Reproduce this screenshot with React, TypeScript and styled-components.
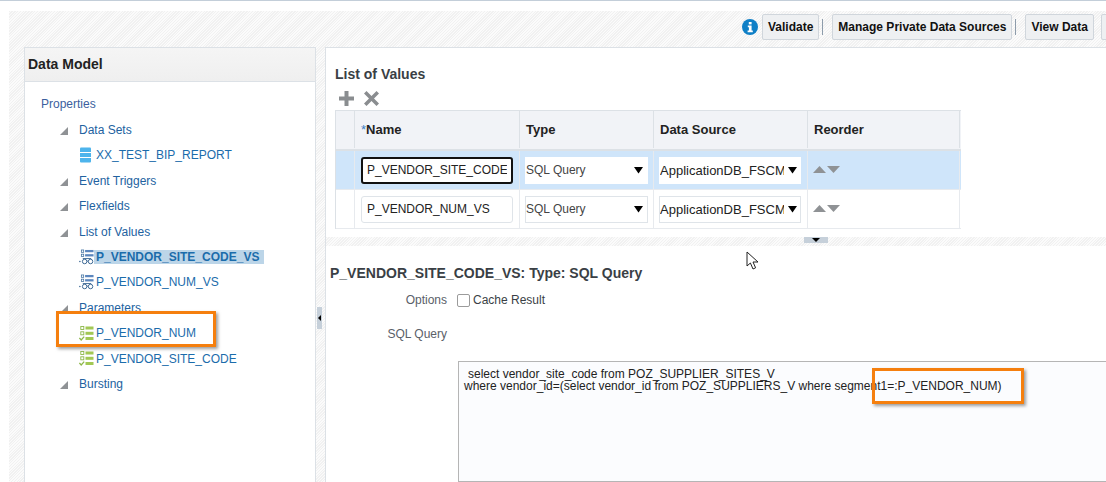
import styled, { createGlobalStyle } from "styled-components";

const GlobalStyle = createGlobalStyle`
  html, body {
    margin: 0;
    padding: 0;
    background: #fff;
  }
  body {
    font-family: "Liberation Sans", Arial, sans-serif;
    font-size: 12px;
    color: #333;
  }
`;

const hatch = `repeating-linear-gradient(135deg, #f1f1f1 0 1px, #fbfbfb 1px 2px)`;

type TreeItem = {
  label: string;
  kind: "section" | "dataset" | "lov" | "param";
  selected?: boolean;
};

const treeItems: TreeItem[] = [
  { label: "Data Sets", kind: "section" },
  { label: "XX_TEST_BIP_REPORT", kind: "dataset" },
  { label: "Event Triggers", kind: "section" },
  { label: "Flexfields", kind: "section" },
  { label: "List of Values", kind: "section" },
  { label: "P_VENDOR_SITE_CODE_VS", kind: "lov", selected: true },
  { label: "P_VENDOR_NUM_VS", kind: "lov" },
  { label: "Parameters", kind: "section" },
  { label: "P_VENDOR_NUM", kind: "param" },
  { label: "P_VENDOR_SITE_CODE", kind: "param" },
  { label: "Bursting", kind: "section" },
];

const lovRows = [
  { name: "P_VENDOR_SITE_CODE_VS", selected: true },
  { name: "P_VENDOR_NUM_VS", selected: false },
];

const DatabaseIcon = () => (
  <svg width="13" height="16" viewBox="0 0 13 16">
    <path d="M1 1.500 Q1 0.500 2 0.500 H11 Q12 0.500 12 1.500 V5 H1Z" fill="#4db4ec" />
    <rect x="1" y="6" width="11" height="4" fill="#4db4ec" />
    <path d="M1 11 H12 V14.500 Q12 15.500 11 15.500 H2 Q1 15.500 1 14.500Z" fill="#4db4ec" />
  </svg>
);

const LovIcon = () => (
  <svg width="16" height="16" viewBox="0 0 16 16" fill="none">
    <rect x="2.500" y="0.500" width="2.500" height="2.500" stroke="#3f6f9f" strokeWidth="0.8" />
    <rect x="2.500" y="5" width="2.500" height="2.500" stroke="#3f6f9f" strokeWidth="0.8" />
    <rect x="6.500" y="0.500" width="9" height="2.400" fill="#5b86bd" />
    <rect x="6.500" y="5" width="9" height="2.400" fill="#5b86bd" />
    <circle cx="6" cy="12.800" r="2.400" stroke="#33618f" strokeWidth="1" />
    <circle cx="12.300" cy="12.800" r="2.400" stroke="#33618f" strokeWidth="1" />
    <path d="M8.400 12.400h1.500M4 9.600h9" stroke="#33618f" strokeWidth="0.9" />
    <circle cx="0.900" cy="12.800" r="0.800" fill="#33618f" />
  </svg>
);

const ParamIcon = () => (
  <svg width="15" height="15" viewBox="0 0 15 15" fill="none">
    <rect x="1.800" y="0.500" width="3" height="3" stroke="#8db84a" strokeWidth="0.9" />
    <rect x="1.800" y="5.800" width="3" height="3" stroke="#8db84a" strokeWidth="0.9" />
    <rect x="6.500" y="0.500" width="8" height="3" fill="#a2c854" />
    <rect x="6.500" y="5.800" width="8" height="3" fill="#a2c854" />
    <rect x="6.500" y="11" width="8" height="3" fill="#a2c854" />
    <path d="M0.400 12 L2.200 14 L5.200 10.600" stroke="#8db84a" strokeWidth="1.300" />
  </svg>
);

const InfoIcon = () => (
  <svg width="16" height="16" viewBox="0 0 16 16">
    <circle cx="8" cy="8" r="8" fill="#0f7fc6" />
    <rect x="6.800" y="3" width="2.800" height="2.400" fill="#fff" />
    <path d="M5.800 6.600h3.800v5h1.200v1.600H5.600v-1.600h1.300V8.200H5.800Z" fill="#fff" />
  </svg>
);

const Cursor = () => (
  <svg width="14" height="20" viewBox="0 0 14 20">
    <path
      d="M1 1 L1 15 L4.400 12 L7 18 L9.600 16.800 L7 11 L12 11 Z"
      fill="#fff"
      stroke="#222"
      strokeWidth="1"
    />
  </svg>
);

const Triangle = ({ down }: { down?: boolean }) => (
  <svg width="14" height="8" viewBox="0 0 14 8">
    <path d={down ? "M0 0H13L6.500 7Z" : "M0 7H13L6.500 0Z"} fill="#8f9295" />
  </svg>
);

const SelectArrow = () => (
  <svg width="9" height="7" viewBox="0 0 9 7">
    <path d="M0 0H9L4.500 6.500Z" fill="#000" />
  </svg>
);

const TreeRowContent = ({ item }: { item: TreeItem }) => {
  if (item.kind === "section") {
    return (
      <SectionRow>
        <Expander />
        <TreeLink>{item.label}</TreeLink>
      </SectionRow>
    );
  }
  return (
    <LeafRow>
      <LeafIcon>
        {item.kind === "dataset" && <DatabaseIcon />}
        {item.kind === "lov" && <LovIcon />}
        {item.kind === "param" && <ParamIcon />}
      </LeafIcon>
      <LeafLabel $selected={item.selected}>{item.label}</LeafLabel>
    </LeafRow>
  );
};

const App = () => {
  return (
    <Page>
      <GlobalStyle />
      <Workspace>
        <Toolbar>
          <InfoSlot>
            <InfoIcon />
          </InfoSlot>
          <ToolButton>Validate</ToolButton>
          <ToolSeparator />
          <ToolButton>Manage Private Data Sources</ToolButton>
          <ToolSeparator />
          <ToolButton>View Data</ToolButton>
          <ToolButton />
        </Toolbar>
        <Panels>
          <Sidebar>
            <SidebarHeader>Data Model</SidebarHeader>
            <Tree>
              <PropertiesLink>Properties</PropertiesLink>
              {treeItems.map((item) => (
                <TreeRowContent key={item.label} item={item} />
              ))}
            </Tree>
            <ParamCallout />
          </Sidebar>
          <VerticalSplitter>
            <SplitterHandle />
          </VerticalSplitter>
          <Main>
            <ListSection>
              <SectionTitle>List of Values</SectionTitle>
              <IconBar>
                <svg width="17" height="17" viewBox="0 0 17 17">
                  <path d="M6.500 1h4v5.500H16v4h-5.500V16h-4v-5.500H1v-4h5.500Z" fill="#8a8d90" />
                </svg>
                <svg width="17" height="17" viewBox="0 0 17 17">
                  <path
                    d="M3.500 1 8.500 6l5-5L16 3.500 11 8.500l5 5L13.500 16l-5-5-5 5L1 13.500l5-5-5-5Z"
                    fill="#8a8d90"
                  />
                </svg>
              </IconBar>
              <LovTable>
                <HeaderRow>
                  <HeaderCell />
                  <HeaderCell>
                    <Required>*</Required>Name
                  </HeaderCell>
                  <HeaderCell>Type</HeaderCell>
                  <HeaderCell>Data Source</HeaderCell>
                  <HeaderCell>Reorder</HeaderCell>
                </HeaderRow>
                {lovRows.map((row) => (
                  <BodyRow key={row.name} $selected={row.selected}>
                    <BodyCell />
                    <NameCell>
                      <NameInput $focused={row.selected}>
                        <NameText>{row.name}</NameText>
                      </NameInput>
                    </NameCell>
                    <BodyCell>
                      <SelectBox $plain={row.selected}>
                        <TypeValue>SQL Query</TypeValue>
                        <SelectArrow />
                      </SelectBox>
                    </BodyCell>
                    <BodyCell>
                      <SelectBox $plain={row.selected} $tight>
                        <SourceValue>ApplicationDB_FSCM</SourceValue>
                        <SelectArrow />
                      </SelectBox>
                    </BodyCell>
                    <ReorderCell>
                      <Triangle />
                      <Triangle down />
                    </ReorderCell>
                  </BodyRow>
                ))}
              </LovTable>
            </ListSection>
            <HorizontalSplitter>
              <CollapseHandle>
                <svg width="8" height="4" viewBox="0 0 8 4">
                  <path d="M0 0H8L4 4Z" fill="#000" />
                </svg>
              </CollapseHandle>
            </HorizontalSplitter>
            <DetailSection>
              <DetailTitle>P_VENDOR_SITE_CODE_VS: Type: SQL Query</DetailTitle>
              <FormRow>
                <FormLabel>Options</FormLabel>
                <Checkbox />
                <CheckboxLabel>Cache Result</CheckboxLabel>
              </FormRow>
              <QueryLabelRow>
                <FormLabel>SQL Query</FormLabel>
              </QueryLabelRow>
              <QueryBox>
                <QueryLine $indent>select vendor_site_code from POZ_SUPPLIER_SITES_V</QueryLine>
                <QueryLine>
                  where vendor_id=(select vendor_id from POZ_SUPPLIERS_V where segment1=:P_VENDOR_NUM)
                </QueryLine>
                <QueryCallout />
              </QueryBox>
            </DetailSection>
            <PointerSpot>
              <Cursor />
            </PointerSpot>
          </Main>
        </Panels>
      </Workspace>
    </Page>
  );
};

export default App;

const Page = styled.div`
  width: 1106px;
  height: 482px;
  overflow: hidden;
  border-top: 1px solid #c3ced9;
  box-sizing: border-box;
  padding: 10px 0 0 9px;
`;

const Workspace = styled.div`
  width: 1097px;
  height: 471px;
  display: flex;
  flex-direction: column;
  background: ${hatch};
`;

const Toolbar = styled.div`
  height: 36px;
  flex: none;
  display: flex;
  align-items: center;
  padding-left: 733px;
  box-sizing: border-box;
  padding-bottom: 5px;
`;

const InfoSlot = styled.div`
  display: flex;
  margin-right: 4px;
`;

const ToolButton = styled.div`
  height: 26px;
  min-width: 10px;
  flex: none;
  box-sizing: border-box;
  padding: 0 5px;
  display: flex;
  align-items: center;
  font-size: 12px;
  font-weight: bold;
  color: #111;
  background: #eef0f2;
  border: 1px solid #d0d6dc;
  border-radius: 2px;
  & + & {
    margin-left: 7px;
  }
`;

const ToolSeparator = styled.div`
  width: 1px;
  height: 16px;
  flex: none;
  background: #8d9cab;
  margin: 0 9px 0 3px;
`;

const Panels = styled.div`
  flex: 1;
  min-height: 0;
  display: flex;
  padding-left: 15px;
`;

const Sidebar = styled.div`
  position: relative;
  width: 292px;
  flex: none;
  box-sizing: border-box;
  background: #fff;
  border: 1px solid #dce1e6;
  border-bottom: none;
`;

const SidebarHeader = styled.div`
  height: 34px;
  box-sizing: border-box;
  padding-left: 3px;
  padding-bottom: 1px;
  display: flex;
  align-items: center;
  font-size: 14px;
  font-weight: bold;
  color: #222;
  background: linear-gradient(#f5f5f5, #efefef);
  border-bottom: 1px solid #dce1e6;
`;

const Tree = styled.div`
  display: flex;
  flex-direction: column;
  padding: 10px 0 0 16px;
`;

const PropertiesLink = styled.div`
  height: 25.4px;
  line-height: 25px;
  color: #3c5f9e;
`;

const SectionRow = styled.div`
  height: 25.4px;
  display: flex;
  align-items: center;
  padding-left: 19px;
`;

const Expander = styled.span`
  width: 0;
  height: 0;
  margin-right: 11px;
  border-left: 8px solid transparent;
  border-bottom: 8px solid #8f9295;
  position: relative;
  top: 1px;
`;

const TreeLink = styled.span`
  color: #22629f;
`;

const LeafRow = styled.div`
  height: 25.4px;
  display: flex;
  align-items: center;
  padding-left: 38px;
`;

const LeafIcon = styled.span`
  width: 15px;
  height: 16px;
  display: flex;
  align-items: center;
  flex: none;
`;

const LeafLabel = styled.span<{ $selected?: boolean }>`
  color: #1b6cab;
  padding: 0 5px 0 2px;
  line-height: 14px;
  background: ${(p) => (p.$selected ? "#bcd5e8" : "transparent")};
  font-weight: ${(p) => (p.$selected ? "bold" : "normal")};
`;

const ParamCallout = styled.div`
  position: absolute;
  left: 31px;
  top: 263px;
  width: 160px;
  height: 36px;
  box-sizing: border-box;
  border: 3px solid #f57f0e;
  box-shadow: 2px 2px 3px rgba(80, 80, 80, 0.55);
`;

const VerticalSplitter = styled.div`
  width: 9px;
  flex: none;
  display: flex;
  align-items: flex-start;
  padding-top: 260px;
  box-sizing: border-box;
  height: 100%;
`;

const SplitterHandle = styled.div`
  width: 5px;
  height: 22px;
  margin-left: 1px;
  background: #c6d0da;
  position: relative;
  &::after {
    content: "";
    position: absolute;
    left: 1px;
    top: 8px;
    border-top: 3px solid transparent;
    border-bottom: 3px solid transparent;
    border-right: 3px solid #000;
  }
`;

const Main = styled.div`
  position: relative;
  flex: 1;
  min-width: 0;
  display: flex;
  flex-direction: column;
  background: #fff;
  border-top: 1px solid #dce1e6;
  border-left: 1px solid #dce1e6;
`;

const ListSection = styled.div`
  height: 189px;
  flex: none;
  box-sizing: border-box;
  padding: 19px 0 0 9px;
`;

const SectionTitle = styled.div`
  font-size: 14px;
  font-weight: bold;
  color: #3a3f45;
  line-height: 15px;
`;

const IconBar = styled.div`
  display: flex;
  gap: 8px;
  height: 28px;
  align-items: center;
  padding: 5px 0 0 3px;
  box-sizing: border-box;
`;

const LovTable = styled.div`
  width: 625px;
  display: flex;
  flex-direction: column;
  border-top: 1px solid #dce1e6;
  border-left: 1px solid #dce1e6;
`;

const HeaderRow = styled.div`
  display: grid;
  grid-template-columns: 19px 165px 134px 154px 152px;
  height: 40px;
  padding-bottom: 1px;
  background: #f1f3f7;
  border-bottom: 2px solid #dce1e6;
  box-sizing: border-box;
`;

const HeaderCell = styled.div`
  display: flex;
  align-items: center;
  padding-left: 6px;
  font-size: 13px;
  font-weight: bold;
  color: #222;
  border-right: 1px solid #dce1e6;
  box-sizing: border-box;
`;

const Required = styled.span`
  color: #3a7fc4;
  font-weight: normal;
`;

const BodyRow = styled.div<{ $selected?: boolean }>`
  display: grid;
  grid-template-columns: 19px 165px 134px 154px 152px;
  height: 39px;
  box-sizing: border-box;
  background: ${(p) => (p.$selected ? "#cfe5fa" : "#fff")};
  border-bottom: 1px solid #e7eaee;
`;

const BodyCell = styled.div`
  display: flex;
  align-items: center;
  padding-left: 5px;
  box-sizing: border-box;
  border-right: 1px solid #e7eaee;
  &:first-child {
    padding-left: 0;
  }
`;

const NameCell = styled(BodyCell)`
  padding-left: 6px;
`;

const ReorderCell = styled(BodyCell)`
  padding-left: 5px;
`;

const NameInput = styled.div<{ $focused?: boolean }>`
  width: 152px;
  height: 27px;
  box-sizing: border-box;
  padding-left: ${(p) => (p.$focused ? "4px" : "5px")};
  display: flex;
  align-items: center;
  background: #fff;
  border-radius: 3px;
  border: ${(p) => (p.$focused ? "2px solid #111" : "1px solid #dfe4e9")};
`;

const NameText = styled.span`
  width: 140px;
  overflow: hidden;
  white-space: nowrap;
  font-size: 12px;
  color: #222;
`;

const SelectBox = styled.div<{ $plain?: boolean; $tight?: boolean }>`
  width: ${(p) => (p.$tight ? "142px" : "123px")};
  height: 27px;
  box-sizing: border-box;
  padding-right: ${(p) => (p.$tight ? "3px" : "4px")};
  display: flex;
  align-items: center;
  justify-content: space-between;
  background: #fff;
  border: 1px solid ${(p) => (p.$plain ? "#fff" : "#dfe4e9")};
`;

const TypeValue = styled.span`
  font-size: 12px;
  color: #444;
  margin-bottom: 1px;
`;

const SourceValue = styled.span`
  width: 124px;
  overflow: hidden;
  white-space: nowrap;
  font-size: 13px;
  color: #222;
`;

const HorizontalSplitter = styled.div`
  height: 9px;
  flex: none;
  background: ${hatch};
  display: flex;
  padding-left: 478px;
`;

const CollapseHandle = styled.div`
  width: 24px;
  height: 6px;
  background: #c6d0da;
  display: flex;
  justify-content: center;
  align-items: center;
`;

const DetailSection = styled.div`
  flex: 1;
  min-height: 0;
  display: flex;
  flex-direction: column;
  padding: 19px 0 0 4px;
`;

const DetailTitle = styled.div`
  font-size: 14px;
  font-weight: bold;
  line-height: 16px;
  color: #3a3f45;
  margin-bottom: 11px;
`;

const FormRow = styled.div`
  display: flex;
  align-items: center;
  height: 16px;
`;

const FormLabel = styled.div`
  width: 117px;
  flex: none;
  text-align: right;
  color: #5a6068;
`;

const Checkbox = styled.span`
  width: 13px;
  height: 13px;
  box-sizing: border-box;
  flex: none;
  margin: 0 3px 0 10px;
  background: #fff;
  border: 1px solid #9b9b9b;
  border-radius: 2px;
`;

const CheckboxLabel = styled.span`
  color: #3a3f45;
`;

const QueryLabelRow = styled.div`
  display: flex;
  margin-top: 19px;
  line-height: 14px;
`;

const QueryBox = styled.div`
  position: relative;
  margin: 20px 0 0 128px;
  flex: 1;
  box-sizing: border-box;
  padding: 6px 0 0 5px;
  background: #fbfcfe;
  border: 1px solid #b5b5b5;
  border-right: none;
  font-size: 12px;
  line-height: 12px;
  color: #222;
  white-space: nowrap;
`;

const QueryLine = styled.div<{ $indent?: boolean }>`
  padding-left: ${(p) => (p.$indent ? "4px" : "0")};
`;

const QueryCallout = styled.div`
  position: absolute;
  left: 413px;
  top: 6px;
  width: 152px;
  height: 36px;
  box-sizing: border-box;
  border: 3px solid #f57f0e;
  box-shadow: 2px 2px 3px rgba(80, 80, 80, 0.55);
`;

const PointerSpot = styled.div`
  position: absolute;
  left: 420px;
  top: 203px;
  display: flex;
`;
